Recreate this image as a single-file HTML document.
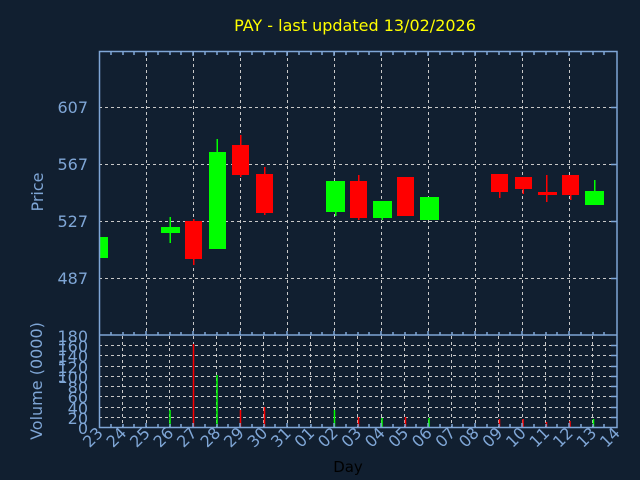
<!DOCTYPE html>
<html><head><meta charset="utf-8"><style>
html,body{margin:0;padding:0;background:#111f30;}
svg{display:block;font-family:"DejaVu Sans","Liberation Sans",sans-serif;}
</style></head><body>
<svg width="640" height="480" viewBox="0 0 640 480" xmlns="http://www.w3.org/2000/svg">
<rect width="640" height="480" fill="#111f30"/>
<text x="355" y="31" font-size="16" fill="#ffff00" text-anchor="middle">PAY - last updated 13/02/2026</text>
<!-- price grid -->
<g stroke="#c8c8c8" stroke-width="1" stroke-dasharray="3,3" fill="none">
<path d="M99 107.5H617M99 164.5H617M99 221.5H617M99 278.5H617"/>
<path d="M146.5 52V335M193.5 52V335M240.5 52V335M287.5 52V335M334.5 52V335M381.5 52V335M428.5 52V335M475.5 52V335M522.5 52V335M569.5 52V335"/>
<!-- volume grid -->
<path d="M99 417.5H617M99 407.5H617M99 396.5H617M99 386.5H617M99 376.5H617M99 366.5H617M99 355.5H617M99 345.5H617"/>
<path d="M122.5 336V427M146.5 336V427M169.5 336V427M193.5 336V427M216.5 336V427M240.5 336V427M263.5 336V427M287.5 336V427M310.5 336V427M334.5 336V427M357.5 336V427M381.5 336V427M404.5 336V427M428.5 336V427M451.5 336V427M475.5 336V427M498.5 336V427M522.5 336V427M545.5 336V427M569.5 336V427M592.5 336V427"/>
</g>
<!-- candles -->
<g>
<rect x="99" y="237" width="9" height="21" fill="#00ff00"/>
<rect x="169.5" y="217" width="1.5" height="26" fill="#00ff00"/>
<rect x="161" y="227" width="19" height="6" fill="#00ff00"/>
<rect x="193" y="219" width="1.5" height="46" fill="#ff0000"/>
<rect x="185" y="221" width="17" height="38" fill="#ff0000"/>
<rect x="216.5" y="139" width="1.5" height="20" fill="#00ff00"/>
<rect x="209" y="152" width="17" height="97" fill="#00ff00"/>
<rect x="240" y="135" width="1.5" height="42" fill="#ff0000"/>
<rect x="232" y="145" width="17" height="30" fill="#ff0000"/>
<rect x="264" y="167" width="1.5" height="48" fill="#ff0000"/>
<rect x="256" y="174" width="17" height="39" fill="#ff0000"/>
<rect x="335" y="205" width="1.5" height="11" fill="#00ff00"/>
<rect x="326" y="181" width="19" height="31" fill="#00ff00"/>
<rect x="358" y="175" width="1.5" height="45" fill="#ff0000"/>
<rect x="350" y="181" width="17" height="37" fill="#ff0000"/>
<rect x="381.5" y="212" width="1.5" height="8" fill="#00ff00"/>
<rect x="373" y="201" width="19" height="17" fill="#00ff00"/>
<rect x="397" y="177" width="17" height="39" fill="#ff0000"/>
<rect x="420" y="197" width="19" height="23" fill="#00ff00"/>
<rect x="499" y="185" width="1.5" height="13" fill="#ff0000"/>
<rect x="491" y="174" width="17" height="18" fill="#ff0000"/>
<rect x="522.5" y="177" width="1.5" height="17" fill="#ff0000"/>
<rect x="515" y="177" width="17" height="12" fill="#ff0000"/>
<rect x="546" y="175" width="1.5" height="27" fill="#ff0000"/>
<rect x="538" y="192" width="19" height="3" fill="#ff0000"/>
<rect x="570" y="190" width="1.5" height="10" fill="#ff0000"/>
<rect x="562" y="175" width="17" height="20" fill="#ff0000"/>
<rect x="594" y="180" width="1.5" height="12" fill="#00ff00"/>
<rect x="585" y="191" width="19" height="14" fill="#00ff00"/>
</g>
<!-- volume bars -->
<g stroke-width="1.5">
<path d="M170 427V410" stroke="#00ff00"/>
<path d="M193.5 427V344" stroke="#ff0000"/>
<path d="M217 427V375" stroke="#00ff00"/>
<path d="M240.5 427V410" stroke="#ff0000"/>
<path d="M264.5 427V407" stroke="#ff0000"/>
<path d="M334.5 427V410" stroke="#00ff00"/>
<path d="M358.5 427V417" stroke="#ff0000"/>
<path d="M382 427V418" stroke="#00ff00"/>
<path d="M405.5 427V417" stroke="#ff0000"/>
<path d="M429 427V418" stroke="#00ff00"/>
<path d="M499.5 427V419" stroke="#ff0000"/>
<path d="M523 427V419" stroke="#ff0000"/>
<path d="M546.5 427V422" stroke="#ff0000"/>
<path d="M570 427V421" stroke="#ff0000"/>
<path d="M593.5 427V419" stroke="#00ff00"/>
</g>
<!-- axes -->
<g stroke="#7fa6d6" stroke-width="1.5" fill="none">
<path d="M99.5 51.5H617V427.5H99.5Z"/>
<path d="M99.5 335H617"/>
<path d="M111 52v3M123 52v3M134 52v3M146 52v4M158 52v3M170 52v3M181 52v3M193 52v4M205 52v3M217 52v3M228 52v3M240 52v4M252 52v3M264 52v3M275 52v3M287 52v4M299 52v3M311 52v3M322 52v3M334 52v4M346 52v3M358 52v3M369 52v3M381 52v4M393 52v3M405 52v3M416 52v3M428 52v4M440 52v3M452 52v3M463 52v3M475 52v4M487 52v3M499 52v3M510 52v3M522 52v4M534 52v3M546 52v3M557 52v3M569 52v4M581 52v3M593 52v3M604 52v3"/>
<path d="M111 335v-3M123 335v-3M134 335v-3M146 335v-4M158 335v-3M170 335v-3M181 335v-3M193 335v-4M205 335v-3M217 335v-3M228 335v-3M240 335v-4M252 335v-3M264 335v-3M275 335v-3M287 335v-4M299 335v-3M311 335v-3M322 335v-3M334 335v-4M346 335v-3M358 335v-3M369 335v-3M381 335v-4M393 335v-3M405 335v-3M416 335v-3M428 335v-4M440 335v-3M452 335v-3M463 335v-3M475 335v-4M487 335v-3M499 335v-3M510 335v-3M522 335v-4M534 335v-3M546 335v-3M557 335v-3M569 335v-4M581 335v-3M593 335v-3M604 335v-3"/>
<path d="M111 427v-3M123 427v-3M134 427v-3M146 427v-4M158 427v-3M170 427v-3M181 427v-3M193 427v-4M205 427v-3M217 427v-3M228 427v-3M240 427v-4M252 427v-3M264 427v-3M275 427v-3M287 427v-4M299 427v-3M311 427v-3M322 427v-3M334 427v-4M346 427v-3M358 427v-3M369 427v-3M381 427v-4M393 427v-3M405 427v-3M416 427v-3M428 427v-4M440 427v-3M452 427v-3M463 427v-3M475 427v-4M487 427v-3M499 427v-3M510 427v-3M522 427v-4M534 427v-3M546 427v-3M557 427v-3M569 427v-4M581 427v-3M593 427v-3M604 427v-3"/>
<path d="M617 107.5h-6M617 164.5h-6M617 221.5h-6M617 278.5h-6M617 417.5h-6M617 407.5h-6M617 396.5h-6M617 386.5h-6M617 376.5h-6M617 366.5h-6M617 355.5h-6M617 345.5h-6"/>
<path d="M59 344.5h6M59 354.5h6M59 364.5h6M59 375.5h6M59 381.5h6"/>
</g>
<g fill="#7fa6d6" font-size="16" text-anchor="end">
<text x="88" y="113">607</text>
<text x="88" y="170">567</text>
<text x="88" y="227">527</text>
<text x="88" y="284">487</text>
</g>
<text transform="translate(43,192) rotate(-90)" font-size="16" fill="#7fa6d6" text-anchor="middle">Price</text>
<text transform="translate(42,381) rotate(-90)" font-size="16" fill="#7fa6d6" text-anchor="middle">Volume (0000)</text>
<g fill="#7fa6d6" font-size="16" text-anchor="end">
<text x="88" y="342">180</text>
<text x="88" y="352">160</text>
<text x="88" y="362">140</text>
<text x="88" y="373">120</text>
<text x="88" y="383">100</text>
<text x="88" y="393">80</text>
<text x="88" y="403">60</text>
<text x="88" y="414">40</text>
<text x="88" y="424">20</text>
<text x="88" y="434">0</text>
</g>
<g fill="#7fa6d6" font-size="16" text-anchor="end">
<text transform="translate(104,434) rotate(-45)">23</text>
<text transform="translate(127.5,434) rotate(-45)">24</text>
<text transform="translate(151,434) rotate(-45)">25</text>
<text transform="translate(174.5,434) rotate(-45)">26</text>
<text transform="translate(198,434) rotate(-45)">27</text>
<text transform="translate(221.5,434) rotate(-45)">28</text>
<text transform="translate(245,434) rotate(-45)">29</text>
<text transform="translate(268.5,434) rotate(-45)">30</text>
<text transform="translate(292,434) rotate(-45)">31</text>
<text transform="translate(315.5,434) rotate(-45)">01</text>
<text transform="translate(339,434) rotate(-45)">02</text>
<text transform="translate(362.5,434) rotate(-45)">03</text>
<text transform="translate(386,434) rotate(-45)">04</text>
<text transform="translate(409.5,434) rotate(-45)">05</text>
<text transform="translate(433,434) rotate(-45)">06</text>
<text transform="translate(456.5,434) rotate(-45)">07</text>
<text transform="translate(480,434) rotate(-45)">08</text>
<text transform="translate(503.5,434) rotate(-45)">09</text>
<text transform="translate(527,434) rotate(-45)">10</text>
<text transform="translate(550.5,434) rotate(-45)">11</text>
<text transform="translate(574,434) rotate(-45)">12</text>
<text transform="translate(597.5,434) rotate(-45)">13</text>
<text transform="translate(621,434) rotate(-45)">14</text>
</g>
<text x="348" y="472" font-size="15" fill="#000000" text-anchor="middle">Day</text>
</svg>
</body></html>
